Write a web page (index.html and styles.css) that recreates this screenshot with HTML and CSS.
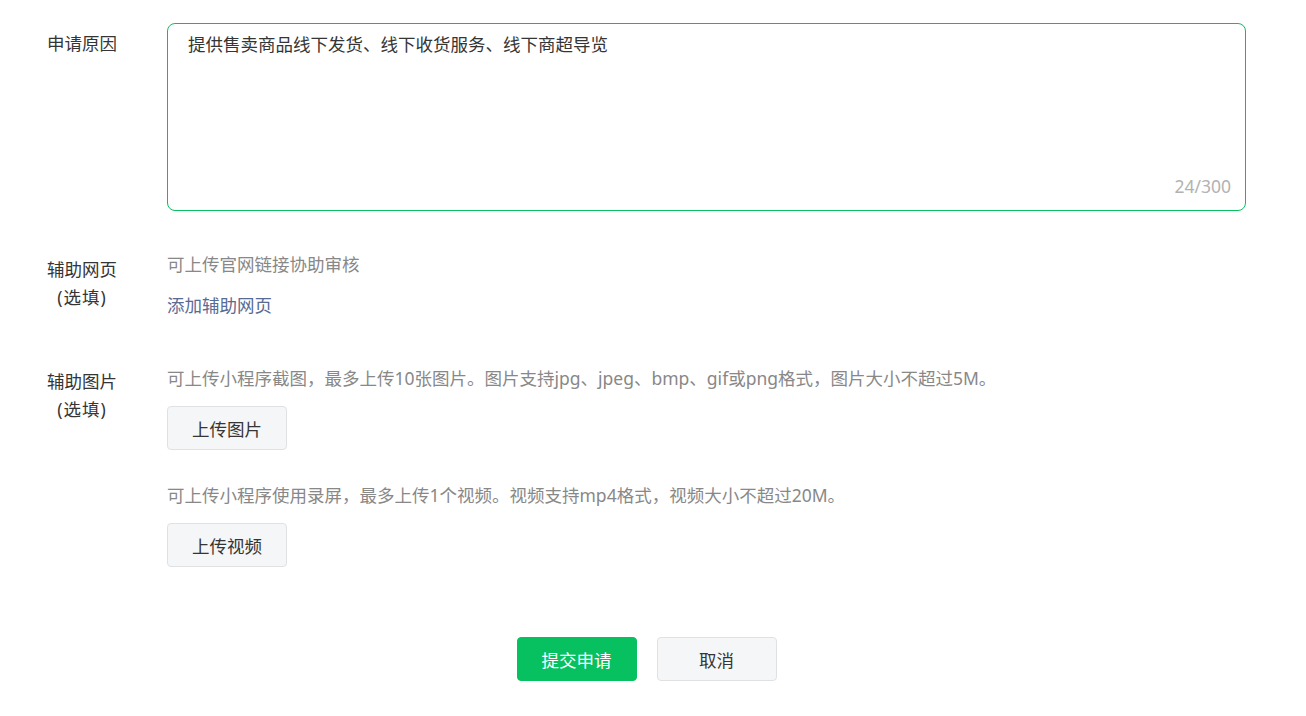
FILE: index.html
```html
<!DOCTYPE html>
<html lang="zh-CN">
<head>
<meta charset="utf-8">
<link rel="stylesheet" href="styles.css">
</head>
<body>
<div class="form">
  <div class="row row-reason">
    <div class="label label-reason">申请原因</div>
    <div class="field">
      <div class="textarea">
        <div class="textarea-text">提供售卖商品线下发货、线下收货服务、线下商超导览</div>
        <div class="counter">24/300</div>
      </div>
    </div>
  </div>

  <div class="row row-web">
    <div class="label label-web">辅助网页<br><span class="opt">(选填)</span></div>
    <div class="field">
      <div class="hint">可上传官网链接协助审核</div>
      <a class="link">添加辅助网页</a>
    </div>
  </div>

  <div class="row row-pic">
    <div class="label label-pic">辅助图片<br><span class="opt">(选填)</span></div>
    <div class="field">
      <div class="hint">可上传小程序截图，最多上传10张图片。图片支持jpg、jpeg、bmp、gif或png格式，图片大小不超过5M。</div>
      <button class="btn btn-default btn-upload">上传图片</button>
      <div class="hint hint-video">可上传小程序使用录屏，最多上传1个视频。视频支持mp4格式，视频大小不超过20M。</div>
      <button class="btn btn-default btn-upload">上传视频</button>
    </div>
  </div>

  <div class="footer">
    <button class="btn btn-primary">提交申请</button>
    <button class="btn btn-default">取消</button>
  </div>
</div>
</body>
</html>
```
FILE: styles.css
```css
html, body {
  margin: 0;
  padding: 0;
  background: #ffffff;
}
body {
  font-family: "Noto Sans", "Noto Sans CJK SC", sans-serif;
  font-size: 17.5px;
  color: #353535;
}
.form {
  padding: 23px 60px 0 47px;
}
.row {
  display: flex;
}
.label {
  width: 120px;
  flex: none;
  line-height: 28px;
  color: #353535;
}
.label .opt {
  display: inline-block;
  width: 70px;
  text-align: center;
  letter-spacing: 1px;
}
.label-reason { margin-top: 6px; }
.label-web { margin-top: 3px; }
.label-pic { margin-top: 1px; }
.field {
  flex: 1;
  min-width: 0;
  display: flex;
  flex-direction: column;
  align-items: flex-start;
}
.textarea {
  box-sizing: border-box;
  width: 100%;
  height: 188px;
  border: 1px solid #07c160;
  border-radius: 8px;
  padding: 8px 14px 12px 20px;
  display: flex;
  flex-direction: column;
  justify-content: space-between;
}
.textarea-text {
  line-height: 24px;
  color: #353535;
}
.counter {
  align-self: flex-end;
  line-height: 24px;
  color: #b2b2b2;
}
.row-web {
  margin-top: 41px;
}
.hint {
  line-height: 24px;
  color: #888888;
}
.link {
  margin-top: 17px;
  line-height: 24px;
  color: #576b95;
  cursor: pointer;
}
.row-pic {
  margin-top: 49px;
}
.btn {
  box-sizing: border-box;
  width: 120px;
  height: 44px;
  border-radius: 4px;
  font-family: inherit;
  font-size: 17.5px;
  padding: 0;
  cursor: pointer;
}
.btn-default {
  background: #f5f6f7;
  border: 1px solid #e0e1e3;
  color: #353535;
}
.btn-primary {
  background: #07c160;
  border: 1px solid #07c160;
  color: #ffffff;
}
.btn-upload {
  margin-top: 16px;
}
.hint-video {
  margin-top: 33px;
}
.footer {
  display: flex;
  justify-content: center;
  gap: 20px;
  margin-top: 70px;
}
```
